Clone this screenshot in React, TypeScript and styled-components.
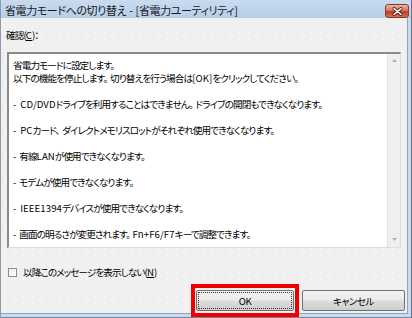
import React from "react";
import styled, { createGlobalStyle } from "styled-components";

const GlobalStyle = createGlobalStyle`
  html, body { margin: 0; padding: 0; background: #f0f0f0; }
  body { font-family: "Noto Sans CJK JP", "Noto Sans", sans-serif; }
`;

const Window = styled.div`
  width: 412px;
  height: 318px;
  box-sizing: border-box;
  display: flex;
  flex-direction: column;
  border-left: 1px solid #8a9bb0;
  border-right: 1px solid #5f7691;
  background: #c7daef;
  font-feature-settings: "palt";
  overflow: hidden;
`;

const TitleBar = styled.div`
  height: 18px;
  flex: none;
  display: flex;
  align-items: center;
  justify-content: space-between;
  padding: 0 2px 0 4px;
  background: linear-gradient(#c9dbef, #b7cde8);
`;

const Title = styled.span`
  font-size: 11px;
  color: #1b1b1b;
  white-space: nowrap;
  letter-spacing: -0.4px;
  word-spacing: 1px;
  margin-top: 1px;
`;

const CloseButton = styled.div`
  width: 22px;
  height: 12px;
  margin-top: 4px;
  border: 1px solid #8a3b2e;
  border-radius: 3px;
  background: linear-gradient(#eab2a3 0%, #d47a66 45%, #c03c24 55%, #d86a50 100%);
  display: flex;
  align-items: center;
  justify-content: center;
`;

const Frame = styled.div`
  flex: 1;
  display: flex;
  padding: 0 3px 3px 0;
  min-height: 0;
  border-bottom: 1px solid #6d86a3;
`;

const Body = styled.div`
  flex: 1;
  display: flex;
  flex-direction: column;
  border-right: 1px solid #8ea6c0;
  border-bottom: 1px solid #8ea6c0;
  background-color: #f0f0f0;
  background-image: radial-gradient(circle, #fbfbfb 0.7px, transparent 0.9px);
  background-size: 9px 6px;
  padding: 0 6px 0 6px;
  font-size: 9.6px;
  letter-spacing: -0.9px;
  word-spacing: 1.5px;
  color: #000;
`;

const Latin = styled.span`
  letter-spacing: 0.1px;
`;

const Label = styled.div`
  height: 13px;
  line-height: 13px;
  margin-top: 11px;
  margin-left: -1px;
`;

const TextBox = styled.div`
  margin-top: 10px;
  height: 196px;
  flex: none;
  box-sizing: border-box;
  display: flex;
  background: #fff;
  border-top: 2px solid #8a8a8a;
  border-left: 2px solid #8a8a8a;
  border-right: 1px solid #dcdcdc;
  border-bottom: 1px solid #dcdcdc;
`;

const Content = styled.div`
  flex: 1;
  padding: 5px 0 0 4px;
  line-height: 13px;
  white-space: nowrap;
  overflow: hidden;
`;

const Line = styled.div<{ $gap?: boolean }>`
  height: 13px;
  margin-top: ${(p) => (p.$gap ? "13px" : "0")};
`;

const ScrollBar = styled.div`
  width: 12px;
  flex: none;
  background: #efefef;
  border-left: 1px dotted #d4d4d4;
  display: flex;
  flex-direction: column;
  justify-content: space-between;
  align-items: center;
  padding: 5px 0 6px;
`;

const CheckRow = styled.div`
  display: flex;
  align-items: center;
  margin-top: 18px;
  height: 12px;
`;

const CheckBox = styled.span`
  width: 9px;
  height: 9px;
  flex: none;
  box-sizing: border-box;
  border: 1px solid #8e8f8f;
  background: linear-gradient(135deg, #ececec, #ffffff);
  margin: 0 6px 0 1px;
`;

const ButtonRow = styled.div`
  margin-top: auto;
  display: flex;
  justify-content: flex-end;
  align-items: flex-start;
  margin-right: -4px;
`;

const Highlight = styled.div`
  border: 4px solid #ee0000;
  padding: 2px 1px 2px 1px;
  margin-bottom: -4px;
  margin-right: 3px;
`;

const Button = styled.div<{ $focused?: boolean; $w: number }>`
  width: ${(p) => p.$w}px;
  height: 21px;
  box-sizing: border-box;
  display: flex;
  align-items: center;
  justify-content: center;
  color: #000;
  letter-spacing: -0.5px;
  border: 1px solid #707070;
  border-radius: 2px;
  background: linear-gradient(#f3f3f3 0%, #ebebeb 48%, #dddddd 52%, #cfcfcf 100%);
  outline: ${(p) => (p.$focused ? "1px dotted #333" : "none")};
  outline-offset: -3px;
  margin-top: ${(p) => (p.$focused ? "0" : "6px")};
`;

const U = styled.span`
  text-decoration: underline;
  letter-spacing: 0.1px;
`;

export default function App() {
  return (
    <>
      <GlobalStyle />
      <Window>
        <TitleBar>
          <Title>省電力モードへの切り替え - [省電力ユーティリティ]</Title>
          <CloseButton>
            <svg width="11" height="9" viewBox="0 0 11 9">
              <path d="M2 1.5 L9 7.5 M9 1.5 L2 7.5" stroke="#5a1a10" strokeWidth="3" strokeLinecap="round" />
              <path d="M2 1.5 L9 7.5 M9 1.5 L2 7.5" stroke="#ffffff" strokeWidth="1.6" strokeLinecap="round" />
            </svg>
          </CloseButton>
        </TitleBar>
        <Frame>
          <Body>
            <Label>
              確認(<U>C</U>)：
            </Label>
            <TextBox>
              <Content>
                <Line>省電力モードに設定します。</Line>
                <Line>
                  以下の機能を停止します。 切り替えを行う場合は<Latin>[OK]</Latin>をクリックしてください。
                </Line>
                <Line $gap>
                  <Latin>- CD/DVD</Latin>ドライブを利用することはできません。 ドライブの開閉もできなくなります。
                </Line>
                <Line $gap>
                  <Latin>- PC</Latin>カード、 ダイレクトメモリスロットがそれぞれ使用できなくなります。
                </Line>
                <Line $gap>
                  <Latin>-</Latin> 有線<Latin>LAN</Latin>が使用できなくなります。
                </Line>
                <Line $gap>
                  <Latin>-</Latin> モデムが使用できなくなります。
                </Line>
                <Line $gap>
                  <Latin>- IEEE1394</Latin>デバイスが使用できなくなります。
                </Line>
                <Line $gap>
                  <Latin>-</Latin> 画面の明るさが変更されます。 <Latin>Fn+F6/F7</Latin>キーで調整できます。
                </Line>
              </Content>
              <ScrollBar>
                <svg width="5" height="3" viewBox="0 0 5 3">
                  <path d="M0 3 L2.5 0 L5 3 Z" fill="#b0b0b0" />
                </svg>
                <svg width="5" height="3" viewBox="0 0 5 3">
                  <path d="M0 0 L2.5 3 L5 0 Z" fill="#b0b0b0" />
                </svg>
              </ScrollBar>
            </TextBox>
            <CheckRow>
              <CheckBox />
              以降このメッセージを表示しない(<U>N</U>)
            </CheckRow>
            <ButtonRow>
              <Highlight>
                <Button $focused $w={98}>OK</Button>
              </Highlight>
              <Button $w={103}>キャンセル</Button>
            </ButtonRow>
          </Body>
        </Frame>
      </Window>
    </>
  );
}
